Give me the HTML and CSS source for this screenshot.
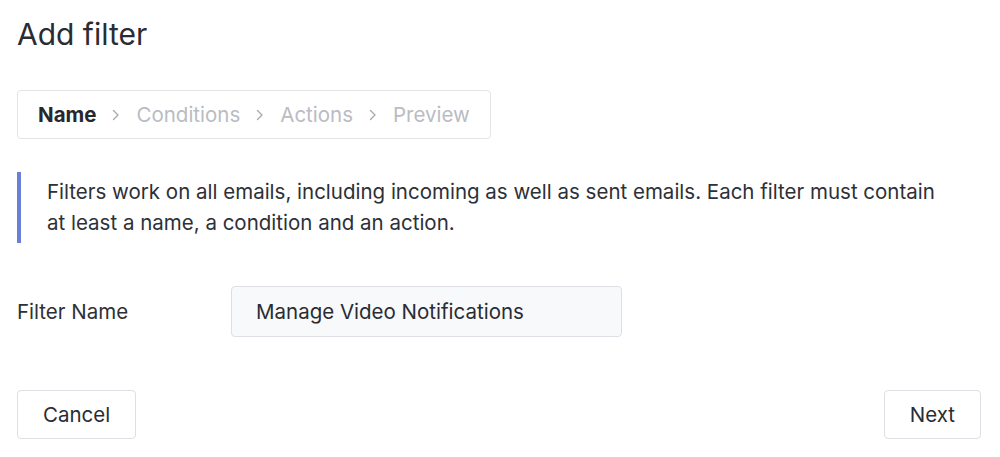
FILE: index.html
```html
<!DOCTYPE html>
<html lang="en">

<head>
    <meta charset="UTF-8">
    <meta name="viewport" content="width=device-width, initial-scale=1.0">
    <title>Add filter</title>
    <link rel="stylesheet" href="styles.css">
</head>

<body>
    <div class="filter-page">
        <h1>Add filter</h1>

        <!-- Wizard steps -->
        <nav class="steps">
            <span class="step active">Name</span>
            <svg class="chevron" viewBox="0 0 8 12" width="8" height="12"><path d="M1.5 1.5 6 6l-4.5 4.5" /></svg>
            <span class="step">Conditions</span>
            <svg class="chevron" viewBox="0 0 8 12" width="8" height="12"><path d="M1.5 1.5 6 6l-4.5 4.5" /></svg>
            <span class="step">Actions</span>
            <svg class="chevron" viewBox="0 0 8 12" width="8" height="12"><path d="M1.5 1.5 6 6l-4.5 4.5" /></svg>
            <span class="step">Preview</span>
        </nav>

        <p class="callout">
            Filters work on all emails, including incoming as well as sent emails. Each filter must contain
            at least a name, a condition and an action.
        </p>

        <form id="filterForm">
            <div class="form-row">
                <label for="filter-name">Filter Name</label>
                <input type="text" id="filter-name" value="Manage Video Notifications">
            </div>

            <!-- Buttons -->
            <div class="button-group">
                <button type="button" class="btn">Cancel</button>
                <button type="submit" class="btn">Next</button>
            </div>
        </form>
    </div>
</body>

</html>
```

FILE: styles.css
```css
body {
    font-family: Inter, "Noto Sans", sans-serif;
    margin: 0;
    padding: 0;
    background-color: #ffffff;
    color: #2a2c33;
}

.filter-page {
    padding: 14px 19px 0 17px;
}

h1 {
    font-size: 30px;
    font-weight: 400;
    line-height: 40px;
    margin: 0 0 36px;
    color: #2a2c33;
}

.steps {
    display: inline-flex;
    align-items: center;
    gap: 16px;
    height: 47px;
    padding: 0 20px;
    border: 1px solid #e2e4e8;
    border-radius: 4px;
}

.step {
    font-size: 20.5px;
    color: #b9bcc3;
}

.step.active {
    font-weight: 700;
    color: #26282e;
}

.chevron {
    fill: none;
    stroke: #a3a7ae;
    stroke-width: 1.3;
    stroke-linecap: round;
    stroke-linejoin: round;
}

.callout {
    margin: 33px 0 0;
    padding: 4px 40px 5px 26px;
    border-left: 4px solid #6c7fd6;
    font-size: 20.5px;
    line-height: 31px;
    color: #2e3037;
}

form {
    margin-top: 43px;
}

.form-row {
    display: flex;
    align-items: center;
}

label {
    width: 214px;
    font-size: 20.5px;
    color: #2e3037;
}

input {
    box-sizing: border-box;
    width: 391px;
    height: 51px;
    padding: 0 24px;
    font-family: inherit;
    font-size: 20.5px;
    color: #2a2c33;
    background-color: #f8f9fb;
    border: 1px solid #dcdfe4;
    border-radius: 4px;
}

input:focus {
    outline: none;
    border-color: #6c7fd6;
}

.button-group {
    display: flex;
    justify-content: space-between;
    margin-top: 53px;
}

.btn {
    height: 49px;
    padding: 0 25px;
    font-family: inherit;
    font-size: 20.5px;
    color: #2a2c33;
    background-color: #ffffff;
    border: 1px solid #dcdfe4;
    border-radius: 4px;
    cursor: pointer;
}

.btn:hover {
    background-color: #f7f8fa;
}
```
